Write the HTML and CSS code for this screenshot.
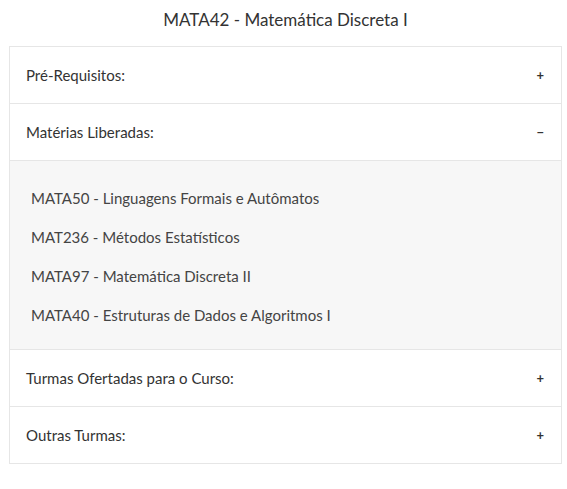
FILE: index.html
```html
<!DOCTYPE html>
<html lang="pt">
<head>
<meta charset="utf-8">
<title>MATA42</title>
<link rel="stylesheet" href="styles.css">
</head>
<body>
<div class="page">
  <h1 class="title">MATA42 - Matemática Discreta I</h1>
  <div class="accordion">
    <div class="section">
      <div class="header"><span>Pré-Requisitos:</span><span class="icon">+</span></div>
    </div>
    <div class="section">
      <div class="header"><span>Matérias Liberadas:</span><span class="icon minus">&minus;</span></div>
      <ul class="content">
        <li>MATA50 - Linguagens Formais e Autômatos</li>
        <li>MAT236 - Métodos Estatísticos</li>
        <li>MATA97 - Matemática Discreta II</li>
        <li>MATA40 - Estruturas de Dados e Algoritmos I</li>
      </ul>
    </div>
    <div class="section">
      <div class="header"><span>Turmas Ofertadas para o Curso:</span><span class="icon">+</span></div>
    </div>
    <div class="section last">
      <div class="header"><span>Outras Turmas:</span><span class="icon">+</span></div>
    </div>
  </div>
</div>
</body>
</html>
```

FILE: styles.css
```css
html, body {
  margin: 0;
  padding: 0;
  background: #ffffff;
}
body {
  font-family: "Lato", "Open Sans", sans-serif;
  color: #333333;
}
.page {
  padding: 0 5px 0 9px;
}
.title {
  margin: 0;
  height: 46px;
  line-height: 40px;
  font-size: 17px;
  font-weight: 400;
  text-align: center;
  color: #333;
}
.accordion {
  border: 1px solid #e6e6e6;
}
.section {
  border-bottom: 1px solid #e6e6e6;
}
.section.last {
  border-bottom: none;
}
.header {
  height: 56px;
  display: flex;
  align-items: center;
  justify-content: space-between;
  padding: 0 17px 0 16px;
  font-size: 15px;
  color: #333;
}
.icon {
  font-size: 13px;
  font-weight: 700;
  color: #333;
}
.content {
  list-style: none;
  margin: 0;
  padding: 18px 21px 14px;
  background: #f7f7f7;
  border-top: 1px solid #e6e6e6;
}
.content li {
  height: 39px;
  line-height: 39px;
  font-size: 15px;
  color: #444;
}
```
